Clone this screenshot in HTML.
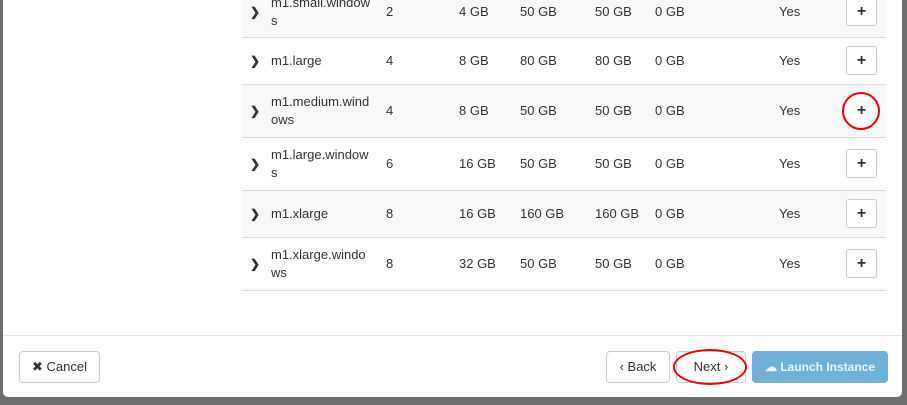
<!DOCTYPE html><html><head><style>
body{margin:0;width:907px;height:405px;background:#6e6e6e;position:relative;overflow:hidden;font-family:"Liberation Sans",sans-serif;font-size:13px;color:#333}
.modal{position:absolute;left:3px;top:0;width:899px;height:397px;background:#fff;border-radius:0 0 5px 5px}
.row{position:absolute;left:239px;width:644px;border-bottom:1px solid #ddd}
.g{background:#f9f9f9}
.c{position:absolute;line-height:18px}
.btn{position:absolute;width:29px;height:27px;border:1px solid #ccc;border-radius:3px;background:#fff;text-align:center;line-height:27px;font-weight:bold;font-size:16px}
.fb{position:absolute;top:351px;height:30px;border:1px solid #ccc;border-radius:4px;background:#fff;line-height:30px;text-align:center;font-size:13px}
.ring{position:absolute;border:2px solid #e00;border-radius:50%}
.r{position:absolute;left:0;width:907px;line-height:18px}.r span{position:absolute}
.r span:first-child{font-size:12px}
</style></head><body>
<div class="modal">
<div class="row g" style="top:0;height:37px"></div>
<div class="row" style="top:38px;height:46px"></div>
<div class="row g" style="top:85px;height:52px"></div>
<div class="row" style="top:138px;height:52px"></div>
<div class="row g" style="top:191px;height:46px"></div>
<div class="row" style="top:238px;height:52px"></div>
<div style="position:absolute;left:0;top:335px;width:899px;border-top:1px solid #e5e5e5"></div>
</div>
<div class="c" style="left:271px;top:-6px">m1.small.window<br>s</div>
<div class="c" style="left:271px;top:52px">m1.large</div>
<div class="c" style="left:271px;top:93px">m1.medium.wind<br>ows</div>
<div class="c" style="left:271px;top:146px">m1.large.window<br>s</div>
<div class="c" style="left:271px;top:205px">m1.xlarge</div>
<div class="c" style="left:271px;top:246px">m1.xlarge.windo<br>ws</div>
<div class="r" style="top:3px"><span style="left:250px;font-weight:bold">&#x276F;</span><span style="left:386px">2</span><span style="left:459px">4 GB</span><span style="left:520px">50 GB</span><span style="left:595px">50 GB</span><span style="left:655px">0 GB</span><span style="left:779px">Yes</span></div>
<div class="r" style="top:52px"><span style="left:250px;font-weight:bold">&#x276F;</span><span style="left:386px">4</span><span style="left:459px">8 GB</span><span style="left:520px">80 GB</span><span style="left:595px">80 GB</span><span style="left:655px">0 GB</span><span style="left:779px">Yes</span></div>
<div class="r" style="top:102px"><span style="left:250px;font-weight:bold">&#x276F;</span><span style="left:386px">4</span><span style="left:459px">8 GB</span><span style="left:520px">50 GB</span><span style="left:595px">50 GB</span><span style="left:655px">0 GB</span><span style="left:779px">Yes</span></div>
<div class="r" style="top:155px"><span style="left:250px;font-weight:bold">&#x276F;</span><span style="left:386px">6</span><span style="left:459px">16 GB</span><span style="left:520px">50 GB</span><span style="left:595px">50 GB</span><span style="left:655px">0 GB</span><span style="left:779px">Yes</span></div>
<div class="r" style="top:205px"><span style="left:250px;font-weight:bold">&#x276F;</span><span style="left:386px">8</span><span style="left:459px">16 GB</span><span style="left:520px">160 GB</span><span style="left:595px">160 GB</span><span style="left:655px">0 GB</span><span style="left:779px">Yes</span></div>
<div class="r" style="top:255px"><span style="left:250px;font-weight:bold">&#x276F;</span><span style="left:386px">8</span><span style="left:459px">32 GB</span><span style="left:520px">50 GB</span><span style="left:595px">50 GB</span><span style="left:655px">0 GB</span><span style="left:779px">Yes</span></div>
<div class="btn" style="left:846px;top:-3px">+</div>
<div class="btn" style="left:846px;top:46px">+</div>
<div class="btn" style="left:846px;top:96px;border-color:transparent">+</div>
<div class="btn" style="left:846px;top:149px">+</div>
<div class="btn" style="left:846px;top:199px">+</div>
<div class="btn" style="left:846px;top:249px">+</div>
<div class="ring" style="left:842px;top:92px;width:34px;height:34px"></div>
<div class="fb" style="left:19px;width:79px">&#x2716; Cancel</div>
<div class="fb" style="left:606px;width:62px">&#x2039; Back</div>
<div class="fb" style="left:676px;width:68px">Next &#x203A;</div>
<div class="fb" style="left:752px;width:134px;background:#6fb1d8;border-color:#6fb1d8;color:#e8f3fa;font-weight:bold;font-size:12px">&#x2601; Launch Instance</div>
<div class="ring" style="left:673px;top:349px;width:70px;height:32px"></div>
</body></html>
